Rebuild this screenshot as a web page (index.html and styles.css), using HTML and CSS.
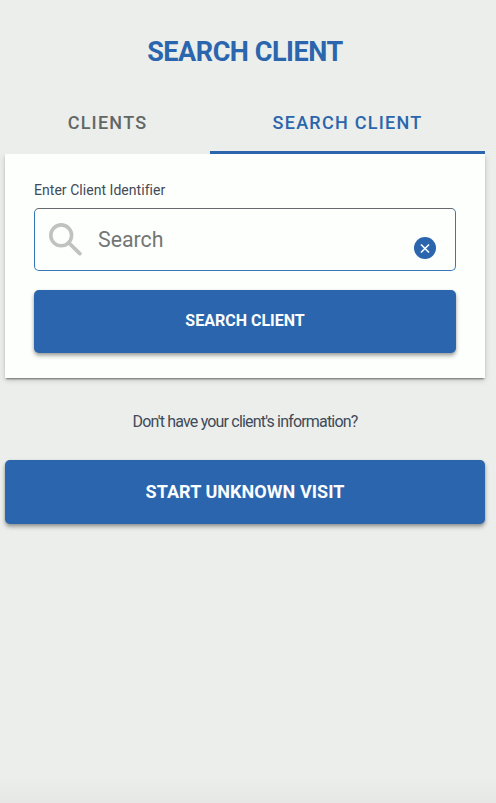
FILE: index.html
```html
<!DOCTYPE html>
<html lang="en">
<head>
<meta charset="utf-8">
<title>Search Client</title>
<link rel="stylesheet" href="styles.css">
</head>
<body>
<main class="screen">
  <h1 class="title"><span>SEARCH CLIENT</span></h1>
  <nav class="tabs">
    <a class="tab"><span>CLIENTS</span></a>
    <a class="tab tab-active"><span>SEARCH CLIENT</span></a>
  </nav>
  <section class="card">
    <label class="label"><span>Enter Client Identifier</span></label>
    <div class="field">
      <svg class="search-icon" viewBox="0 0 34 34"><circle cx="12.2" cy="12.3" r="10.4" fill="none" stroke="#c0c1c0" stroke-width="3.6"/><path d="M20 20 30.8 30.6" stroke="#c0c1c0" stroke-width="3.8" stroke-linecap="round"/></svg>
      <span class="placeholder">Search</span>
      <svg class="clear-icon" viewBox="0 0 22 22"><circle cx="11" cy="11" r="11" fill="#2a65ad"/><path d="m7 7.5 8 8m0-8-8 8" stroke="#f4faff" stroke-width="1.7"/></svg>
    </div>
    <button class="button search-button"><span>SEARCH CLIENT</span></button>
  </section>
  <p class="hint"><span>Don't have your client's information?</span></p>
  <button class="button visit-button"><span>START UNKNOWN VISIT</span></button>
</main>
</body>
</html>
```
FILE: styles.css
```css
* { box-sizing: border-box; }
body {
  margin: 0;
  background: #ebeeeb;
  font-family: Roboto, "Liberation Sans", sans-serif;
}
.screen {
  height: 803px;
  padding: 34px 11px 0 5px;
  background: linear-gradient(#ebeeeb 775px, #e7e8e6 803px);
}
.title {
  margin: 0;
  height: 60px;
  line-height: 36px;
  text-align: center;
  font-size: 27px;
  font-weight: 700;
  letter-spacing: -0.45px;
  color: #2a65ad;
}
.tabs { display: flex; height: 60px; }
.tab {
  width: 205px;
  height: 60px;
  line-height: 57px;
  text-align: center;
  font-size: 18px;
  font-weight: 500;
  letter-spacing: 1.25px;
  color: #626765;
}
.tab-active {
  width: 275px;
  color: #2a65ad;
  border-bottom: 3px solid #2a65ad;
}
.card {
  height: 224px;
  padding: 24px 29px 0;
  background: #fdfffd;
  box-shadow: 0 2px 2px -1px rgba(0, 0, 0, .5), 0 2px 6px rgba(0, 0, 0, .16);
  clip-path: inset(0 -8px -12px);
}
.label {
  display: block;
  height: 30px;
  line-height: 24px;
  font-size: 14px;
  letter-spacing: 0.04px;
  color: #414a58;
}
.field {
  display: flex;
  height: 63px;
  padding: 14px 19px 0 14px;
  border: 1px solid #3976b6;
  border-top-color: #66696c;
  border-radius: 5px;
}
.search-icon { width: 34px; height: 34px; }
.placeholder {
  margin-left: 15px;
  line-height: 34px;
  font-size: 21.3px;
  color: #747674;
}
.clear-icon { width: 22px; height: 22px; margin: 14px 0 0 auto; }
.button {
  display: block;
  width: 100%;
  height: 63px;
  padding: 0 0 2px;
  border: 0;
  border-radius: 5px;
  background: #2a65ad;
  color: #fbfdff;
  font-family: inherit;
  font-weight: 700;
  box-shadow: 0 3px 4px rgba(0, 0, 0, .3), 0 1px 3px rgba(0, 0, 0, .15);
}
.search-button { margin-top: 19px; font-size: 16px; }
.hint {
  margin: 0;
  height: 82px;
  padding-top: 32px;
  line-height: 24px;
  text-align: center;
  font-size: 16px;
  letter-spacing: -0.82px;
  color: #414a58;
}
.visit-button { height: 64px; font-size: 18px; letter-spacing: 0.05px; }
```
